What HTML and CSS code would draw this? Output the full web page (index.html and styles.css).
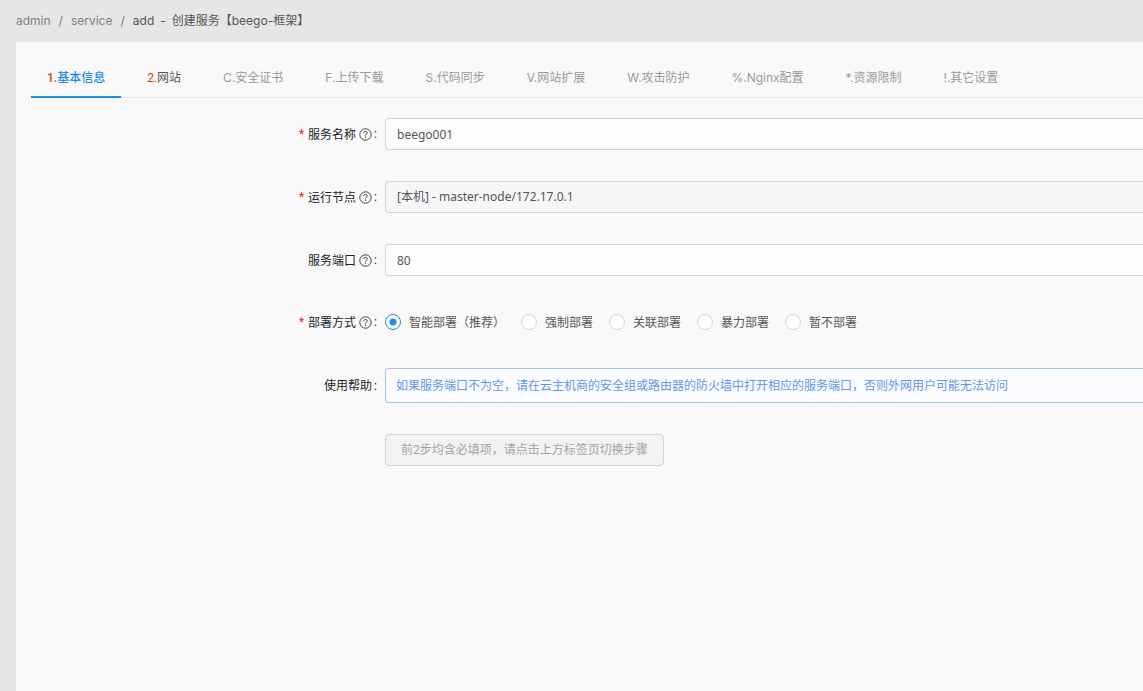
FILE: index.html
```html
<!DOCTYPE html>
<html lang="zh-CN">
<head>
<meta charset="utf-8">
<title>创建服务</title>
<link rel="stylesheet" href="styles.css">
</head>
<body>
<svg class="sprite" aria-hidden="true">
  <symbol id="help" viewBox="0 0 13 13">
    <circle cx="6.500" cy="6.500" r="5.700" fill="none" stroke="currentColor" stroke-width=".85"/>
    <path d="M4.700 5.100C4.700 4 5.500 3.400 6.500 3.400s1.800.6 1.800 1.600C8.300 6.200 6.500 6.200 6.500 7.700" fill="none" stroke="currentColor" stroke-width=".85"/>
    <circle cx="6.500" cy="9.200" r=".6" fill="currentColor"/>
  </symbol>
</svg>
<nav class="breadcrumb" aria-label="路径">
  <a href="#">admin</a><span class="sep">/</span><a href="#">service</a><span class="sep">/</span><span class="current">add</span><span class="dash">-</span><span class="current">创建服务【beego-框架】</span>
</nav>
<main class="card">
  <div class="tabs" role="tablist">
    <button class="tab active" role="tab" aria-selected="true"><span class="num">1.</span>基本信息</button>
    <button class="tab ready" role="tab"><span class="num">2.</span>网站</button>
    <button class="tab" role="tab">C.安全证书</button>
    <button class="tab" role="tab">F.上传下载</button>
    <button class="tab" role="tab">S.代码同步</button>
    <button class="tab" role="tab">V.网站扩展</button>
    <button class="tab" role="tab">W.攻击防护</button>
    <button class="tab" role="tab">%.Nginx配置</button>
    <button class="tab" role="tab">*.资源限制</button>
    <button class="tab" role="tab">!.其它设置</button>
  </div>
  <form class="form">
    <div class="row">
      <label class="label" for="name"><span class="req">*</span><span class="text">服务名称</span><svg class="help"><use href="#help"/></svg><span class="colon">:</span></label>
      <input class="field" id="name" type="text" value="beego001">
    </div>
    <div class="row">
      <label class="label" for="node"><span class="req">*</span><span class="text">运行节点</span><svg class="help"><use href="#help"/></svg><span class="colon">:</span></label>
      <select class="field muted" id="node"><option>[本机] - master-node/172.17.0.1</option></select>
    </div>
    <div class="row">
      <label class="label" for="port"><span class="text">服务端口</span><svg class="help"><use href="#help"/></svg><span class="colon">:</span></label>
      <input class="field" id="port" type="text" value="80">
    </div>
    <div class="row">
      <span class="label" id="mode"><span class="req">*</span><span class="text">部署方式</span><svg class="help"><use href="#help"/></svg><span class="colon">:</span></span>
      <div class="radios" role="radiogroup" aria-labelledby="mode">
        <label class="radio"><input type="radio" name="mode" checked><span class="text">智能部署（推荐）</span></label>
        <label class="radio"><input type="radio" name="mode"><span class="text">强制部署</span></label>
        <label class="radio"><input type="radio" name="mode"><span class="text">关联部署</span></label>
        <label class="radio"><input type="radio" name="mode"><span class="text">暴力部署</span></label>
        <label class="radio"><input type="radio" name="mode"><span class="text">暂不部署</span></label>
      </div>
    </div>
    <div class="row">
      <span class="label"><span class="text">使用帮助</span><span class="colon">:</span></span>
      <p class="notice">如果服务端口不为空，请在云主机商的安全组或路由器的防火墙中打开相应的服务端口，否则外网用户可能无法访问</p>
    </div>
    <div class="row">
      <span class="label"></span>
      <button class="submit" type="button" disabled>前2步均含必填项，请点击上方标签页切换步骤</button>
    </div>
  </form>
</main>
</body>
</html>
```
FILE: styles.css
```css
* { box-sizing: border-box; }

body {
  margin: 0;
  min-height: 100vh;
  display: flex;
  flex-direction: column;
  background: #e6e6e6;
  color: #555;
  font: 12px/20px Roboto, "Noto Sans CJK SC", sans-serif;
}

button, input, select { font: inherit; color: inherit; }

.sprite { display: none; }

.breadcrumb {
  display: flex;
  height: 42px;
  padding: 11px 16px;
  color: #808080;
  font-family: Inter, "Noto Sans CJK SC", sans-serif;
  white-space: nowrap;
}
.breadcrumb a { color: inherit; text-decoration: none; }
.sep { margin: 0 8px; }
.dash { margin: 0 6px; }
.current, .dash { color: #555; }

.card {
  flex: 1;
  margin-left: 16px;
  padding-left: 15px;
  background: #f9f9f9;
}

.tabs {
  display: flex;
  gap: 10px;
  margin-bottom: 20px;
  padding-top: 16px;
  border-bottom: 1px solid #e6e6e6;
}
.tab {
  flex: none;
  height: 40px;
  margin-bottom: -1px;
  padding: 2px 16px 0;
  border: 0;
  border-bottom: 2px solid transparent;
  background: none;
  color: #999;
  font-family: Inter, "Noto Sans CJK SC", sans-serif;
  white-space: nowrap;
}
.tab.ready { color: #555; }
.tab.active {
  border-color: #1f8ceb;
  color: #1f8ceb;
  font-weight: 500;
}
.num { color: #d4380d; font-family: Roboto, sans-serif; }

.row {
  display: flex;
  align-items: center;
  margin-bottom: 31px;
}
.label {
  display: flex;
  flex: 0 0 354px;
  align-items: center;
  justify-content: flex-end;
  padding-right: 8px;
  color: #222;
}
.text { padding-top: 1px; }
.req { margin-right: 4px; color: #f5222d; }
.help { width: 13px; height: 13px; margin-left: 3px; }
.colon { margin-left: 2px; }

.field {
  flex: 1;
  min-width: 0;
  height: 32px;
  padding: 0 11px;
  border: 1px solid #d4d4d4;
  border-right: 0;
  border-radius: 4px 0 0 4px;
  background: #fdfdfd;
  font-family: "Noto Sans", "Noto Sans CJK SC", sans-serif;
  appearance: none;
}
.muted { background: #f7f7f7; }

.radios { display: flex; gap: 16px; height: 30px; }
.radio { display: flex; align-items: center; gap: 8px; }
.radio input {
  width: 16px;
  height: 16px;
  margin: 0;
  border: 1px solid #d4d4d4;
  border-radius: 50%;
  background: #fff;
  appearance: none;
}
.radio input:checked {
  border-color: #1f8ceb;
  background: radial-gradient(circle, #1f8ceb 3px, #fff 4px);
}

.notice {
  flex: 1;
  margin: 0;
  padding: 7px 10px 6px;
  border: 1px solid #a9c5ee;
  border-right: 0;
  border-radius: 4px 0 0 4px;
  background: #fafcff;
  color: #6495ed;
}

.submit {
  height: 32px;
  padding: 0 15px;
  border: 1px solid #d4d4d4;
  border-radius: 4px;
  background: #f3f3f3;
  color: #a3a3a3;
}
```
